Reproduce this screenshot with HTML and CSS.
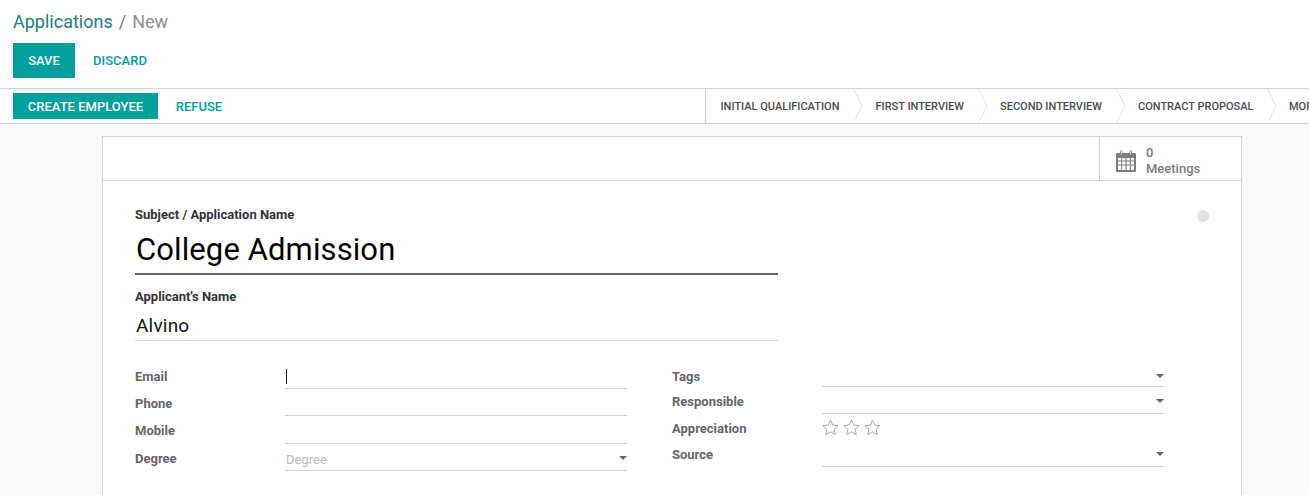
FILE: index.html
```html
<!DOCTYPE html>
<html lang="en">
<head>
<meta charset="utf-8">
<title>Applications / New</title>
<link rel="stylesheet" href="styles.css">
</head>
<body>
<header class="control">
  <div class="crumbs"><a class="crumb-link">Applications</a><span class="crumb-sep">/</span><span class="crumb-cur">New</span></div>
  <div class="actions">
    <button class="btn btn-primary btn-save">SAVE</button>
    <button class="btn btn-link btn-discard">DISCARD</button>
  </div>
</header>
<div class="statusbar">
  <div class="status-actions">
    <button class="btn btn-primary btn-create">CREATE EMPLOYEE</button>
    <button class="btn btn-link btn-refuse">REFUSE</button>
  </div>
  <div class="stages">
    <div class="stage">INITIAL QUALIFICATION<svg class="chev" viewBox="0 0 10 34" width="10" height="34"><path d="M.5 0L9 17 .5 34" fill="none" stroke="#dfe3e8"/></svg></div>
    <div class="stage">FIRST INTERVIEW<svg class="chev" viewBox="0 0 10 34" width="10" height="34"><path d="M.5 0L9 17 .5 34" fill="none" stroke="#dfe3e8"/></svg></div>
    <div class="stage">SECOND INTERVIEW<svg class="chev" viewBox="0 0 10 34" width="10" height="34"><path d="M.5 0L9 17 .5 34" fill="none" stroke="#dfe3e8"/></svg></div>
    <div class="stage">CONTRACT PROPOSAL<svg class="chev" viewBox="0 0 10 34" width="10" height="34"><path d="M.5 0L9 17 .5 34" fill="none" stroke="#dfe3e8"/></svg></div>
    <div class="stage stage-last">MORE</div>
  </div>
</div>
<main class="content">
  <section class="sheet">
    <div class="buttonbox">
      <div class="statbtn">
        <svg class="cal" viewBox="0 0 22 22" width="22" height="22">
          <path fill="#7c7c7c" d="M2 3h3V2h2v1h8V2h2v1h3a1 1 0 0 1 1 1v17a1 1 0 0 1-1 1H2a1 1 0 0 1-1-1V4a1 1 0 0 1 1-1z"/>
          <rect x="5.5" y="0.5" width="1.6" height="4.5" rx=".8" fill="#fff" stroke="#7c7c7c" stroke-width=".8"/>
          <rect x="14.9" y="0.5" width="1.6" height="4.5" rx=".8" fill="#fff" stroke="#7c7c7c" stroke-width=".8"/>
          <path fill="#fff" d="M3 8h3.2v2.6H3zM7.2 8h3.2v2.6H7.2zM11.6 8h3.2v2.6h-3.2zM15.8 8H19v2.6h-3.2zM3 11.6h3.2v2.9H3zM7.2 11.6h3.2v2.9H7.2zM11.6 11.6h3.2v2.9h-3.2zM15.8 11.6H19v2.9h-3.2zM3 15.5h3.2V20H3zM7.2 15.5h3.2V20H7.2zM11.6 15.5h3.2V20h-3.2zM15.8 15.5H19V20h-3.2z"/>
        </svg>
        <div class="stat-text"><span class="stat-val">0</span><span class="stat-label">Meetings</span></div>
      </div>
    </div>
    <div class="sheet-body">
      <span class="kanban-dot"></span>
      <label class="title-label">Subject / Application Name</label>
      <div class="title-field">College Admission</div>
      <label class="title-label name-label">Applicant's Name</label>
      <div class="name-field">Alvino</div>
      <div class="columns">
        <div class="col">
          <div class="row"><span class="lbl">Email</span><span class="val"><i class="caret"></i></span></div>
          <div class="row"><span class="lbl">Phone</span><span class="val"></span></div>
          <div class="row row-28"><span class="lbl">Mobile</span><span class="val"></span></div>
          <div class="row"><span class="lbl">Degree</span><span class="val val-sel"><span class="placeholder">Degree</span><i class="arrow"></i></span></div>
        </div>
        <div class="col col-right">
          <div class="row"><span class="lbl">Tags</span><span class="val val-sel"><i class="arrow"></i></span></div>
          <div class="row"><span class="lbl">Responsible</span><span class="val val-sel"><i class="arrow"></i></span></div>
          <div class="row row-26"><span class="lbl">Appreciation</span><span class="val val-plain"><span class="stars">
            <svg viewBox="0 0 17 17" width="17" height="17"><path d="M8.5 1.2l2.2 4.8 5.3.6-3.9 3.6 1.1 5.3-4.7-2.7-4.7 2.7 1.1-5.3L1 6.6l5.3-.6z" fill="none" stroke="#a8a8a8"/></svg>
            <svg viewBox="0 0 17 17" width="17" height="17"><path d="M8.5 1.2l2.2 4.8 5.3.6-3.9 3.6 1.1 5.3-4.7-2.7-4.7 2.7 1.1-5.3L1 6.6l5.3-.6z" fill="none" stroke="#a8a8a8"/></svg>
            <svg viewBox="0 0 17 17" width="17" height="17"><path d="M8.5 1.2l2.2 4.8 5.3.6-3.9 3.6 1.1 5.3-4.7-2.7-4.7 2.7 1.1-5.3L1 6.6l5.3-.6z" fill="none" stroke="#a8a8a8"/></svg>
          </span></span></div>
          <div class="row"><span class="lbl">Source</span><span class="val val-sel"><i class="arrow"></i></span></div>
        </div>
      </div>
    </div>
  </section>
</main>
</body>
</html>
```
FILE: styles.css
```css
* { box-sizing: border-box; }
html, body { margin: 0; padding: 0; height: 100%; overflow: hidden; }
body { font-family: Roboto, "Noto Sans", sans-serif; font-size: 13px; color: #4c4c4c; background: #f9f9f9; }

.control { height: 89px; background: #fff; border-bottom: 1px solid #ced4da; padding: 11px 13px 0; }
.crumbs { font-size: 18px; line-height: 22px; height: 32px; display: flex; }
.crumb-link { color: #21807b; }
.crumb-sep { color: #777; margin: 0 6px 0 6px; }
.crumb-cur { color: #8f8f8f; }
.actions { display: flex; }

.btn { border: 0; padding: 0; font: 500 13px/16px Roboto, sans-serif; cursor: pointer; }
.btn-primary { background: #00a09d; color: #fff; }
.btn-link { background: none; color: #00a09d; }
.btn-save { width: 62px; height: 35px; }
.btn-discard { width: 90px; height: 35px; }
.btn-create { width: 145px; height: 26px; padding-top: 2px; }
.btn-refuse { width: 82px; height: 26px; padding-top: 2px; }

.statusbar { height: 35px; background: #fff; border-bottom: 1px solid #ced4da; display: flex; justify-content: space-between; overflow: hidden; }
.status-actions { display: flex; align-items: flex-start; padding: 4px 0 0 13px; }
.stages { display: flex; width: 604px; flex: none; border-left: 1px solid #ced4da; overflow: hidden; }
.stage { position: relative; flex: none; font-weight: 500; font-size: 11px; line-height: 35px; color: #4c4c4c; padding: 0 36px 0 14.5px; white-space: nowrap; }
.stage + .stage { padding-left: 0; }
.stage-last { padding-right: 0; margin-left: -.5px; }
.chev { position: absolute; right: 12px; top: 0; }

.content { padding: 12px 67px 0 102px; }
.sheet { background: #fff; border: 1px solid #ced4da; border-bottom: 0; height: 359px; overflow: hidden; }
.buttonbox { height: 44px; border-bottom: 1px solid #ced4da; display: flex; justify-content: flex-end; }
.statbtn { width: 142px; border-left: 1px solid #ced4da; display: flex; padding: 12px 0 0 15px; }
.cal { margin-top: 1px; }
.stat-text { margin-left: 9px; display: flex; flex-direction: column; color: #7c7c7c; font-weight: 500; font-size: 13px; line-height: 16px; margin-top: -4px; }

.sheet-body { position: relative; padding: 26px 32px 0; }
.kanban-dot { position: absolute; top: 29px; right: 32px; width: 12px; height: 12px; border-radius: 50%; background: #dee2e6; }
.title-label { display: block; font-weight: 700; font-size: 13px; line-height: 16px; color: #333; }
.title-field { width: 643px; height: 52px; font-size: 31px; letter-spacing: .1px; line-height: 38px; color: #000; padding: 8px 0 0 1px; border-bottom: 2px solid #666; }
.name-label { margin-top: 14px; }
.name-field { width: 643px; height: 35px; font-size: 19px; letter-spacing: .2px; line-height: 28px; color: #111; padding: 6px 0 0 1px; border-bottom: 1px solid #ced4da; margin-top: 1px; }

.columns { display: flex; margin-top: 21px; }
.col { width: 492px; flex: none; }
.col-right { margin-left: 45px; margin-top: -2px; }
.row { display: flex; height: 27px; }
.row-28 { height: 28px; }
.row-26 { height: 26px; }
.lbl { width: 150px; flex: none; font-weight: 700; font-size: 13px; line-height: 16px; padding-top: 7px; color: #666; }
.col-right .row:first-child { padding-top: 2px; }
.val { position: relative; width: 342px; border-bottom: 1px solid #ced4da; }
.val-plain { border-bottom: 0; }
.caret { position: absolute; left: 1px; top: 7px; width: 1px; height: 15px; background: #111; }
.placeholder { position: absolute; left: 1px; top: 8px; font-size: 13px; line-height: 16px; color: #bbb; }
.arrow { position: absolute; right: 0; top: 12px; width: 0; height: 0; border-left: 4px solid transparent; border-right: 4px solid transparent; border-top: 4px solid #666; }
.stars { display: flex; gap: 4px; padding-top: 5px; }
```
